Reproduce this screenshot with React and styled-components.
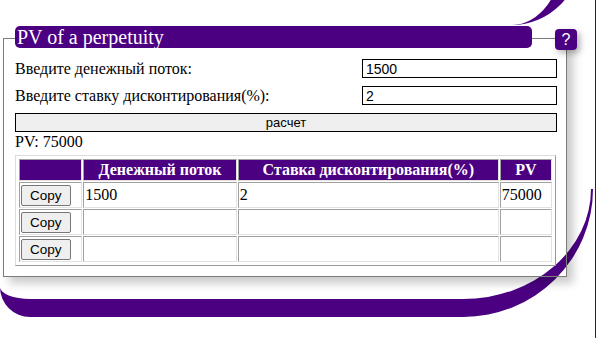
import React from 'react';
import styled, { createGlobalStyle } from 'styled-components';

const INDIGO = '#4b0082';

const GlobalStyle = createGlobalStyle`
  html, body {
    margin: 0;
    padding: 0;
    background: #fff;
  }
  body {
    font-family: "Liberation Serif", "Times New Roman", serif;
    font-size: 16px;
    color: #000;
  }
`;

const Page = styled.div`
  position: relative;
  width: 597px;
  height: 338px;
  overflow: hidden;
`;

const Decor = styled.svg`
  position: absolute;
  left: 0;
  top: 0;
  z-index: 0;
`;

const Panel = styled.div`
  position: relative;
  z-index: 1;
  box-sizing: border-box;
  width: 564px;
  height: 239px;
  margin: 38px 0 0 3px;
  padding: 0 9px 0 11px;
  border: 1px solid #7c7c7c;
  box-shadow: 6px 6px 9px rgba(0, 0, 0, 0.22);
  display: flex;
  flex-direction: column;
`;

const Header = styled.div`
  display: flex;
  margin-top: -13px;
  height: 22px;
`;

const Title = styled.h1`
  margin: 0;
  width: 517px;
  height: 22px;
  box-sizing: border-box;
  padding-left: 2px;
  background: ${INDIGO};
  color: #fff;
  border-radius: 5px;
  font-family: "Liberation Serif", "Times New Roman", serif;
  font-weight: normal;
  font-size: 20px;
  line-height: 22px;
`;

const Help = styled.button`
  position: absolute;
  top: -10px;
  right: -11px;
  width: 22px;
  height: 21px;
  padding: 0;
  border: none;
  border-radius: 4px;
  background: ${INDIGO};
  color: #fff;
  font-family: "Liberation Sans", Arial, sans-serif;
  font-size: 16px;
  line-height: 21px;
  box-shadow: 3px 3px 6px rgba(0, 0, 0, 0.3);
`;

const Row = styled.div`
  display: flex;
  justify-content: space-between;
  align-items: center;
  height: 19px;
  margin-top: ${p => p.$gap}px;
`;

const Label = styled.label`
  font-size: 16px;
  line-height: 19px;
`;

const Field = styled.input`
  box-sizing: border-box;
  width: 195px;
  height: 19px;
  margin: 0;
  padding: 0 3px;
  border: 1px solid #000;
  font-family: "Liberation Sans", Arial, sans-serif;
  font-size: 14px;
  color: #000;
  outline: none;
`;

const CalcButton = styled.button`
  box-sizing: border-box;
  width: 100%;
  height: 19px;
  margin-top: 8px;
  padding: 0;
  border: 1px solid #000;
  background: #efefef;
  font-family: "Liberation Sans", Arial, sans-serif;
  font-size: 13px;
  color: #000;
`;

const Result = styled.div`
  font-size: 16px;
  line-height: 18px;
  margin-top: 1px;
`;

const Table = styled.table`
  box-sizing: border-box;
  width: 541px;
  margin-top: 4px;
  table-layout: fixed;
  border-collapse: separate;
  border-spacing: 1px;
  padding: 2px;
  border: 1px solid;
  border-color: #dcdcdc #9a9a9a #9a9a9a #dcdcdc;
`;

const Th = styled.th`
  box-sizing: border-box;
  width: ${p => p.$w}px;
  height: 22px;
  padding: 1px;
  background: ${INDIGO};
  color: #fff;
  font-weight: bold;
  font-size: 16px;
  text-align: center;
  border: 1px solid;
  border-color: #a0a0a0 #e2e2e2 #e2e2e2 #a0a0a0;
`;

const Td = styled.td`
  box-sizing: border-box;
  height: 26px;
  padding: 1px;
  font-size: 16px;
  vertical-align: middle;
  border: 1px solid;
  border-color: #a0a0a0 #e2e2e2 #e2e2e2 #a0a0a0;
`;

const CopyButton = styled.button`
  box-sizing: border-box;
  height: 21px;
  margin: 0;
  padding: 0 8px;
  border: 1px solid #767676;
  border-radius: 2px;
  background: #efefef;
  font-family: "Liberation Sans", Arial, sans-serif;
  font-size: 13.5px;
  color: #000;
`;

const rows = [
  { cash: '1500', rate: '2', pv: '75000' },
  { cash: '', rate: '', pv: '' },
  { cash: '', rate: '', pv: '' },
];

const Decoration = () =>
  <Decor width="597" height="338" viewBox="0 0 597 338">
    <path
      fill={INDIGO}
      d="M512 25 A68 68 0 0 0 580 -43 L562 -43 A50 68 0 0 1 512 25 Z"
    />
    <rect x="595" y="0" width="1" height="338" fill={INDIGO} />
    <path
      fill={INDIGO}
      d="M0 287 A30 30 0 0 0 30 317 L463 317 A130 128 0 0 0 593 189 L591 189 A128 110 0 0 1 463 299 L30 299 A30 12 0 0 1 0 287 Z"
    />
  </Decor>;

const App = () =>
  <Page>
    <GlobalStyle />
    <Decoration />
    <Panel>
      <Header>
        <Title>PV of a perpetuity</Title>
      </Header>
      <Help>?</Help>
      <Row $gap={11}>
        <Label>Введите денежный поток:</Label>
        <Field defaultValue="1500" />
      </Row>
      <Row $gap={8}>
        <Label>Введите ставку дисконтирования(%):</Label>
        <Field defaultValue="2" />
      </Row>
      <CalcButton>расчет</CalcButton>
      <Result>PV: 75000</Result>
      <Table>
        <thead>
          <tr>
            <Th $w={63}></Th>
            <Th $w={153}>Денежный поток</Th>
            <Th $w={260}>Ставка дисконтирования(%)</Th>
            <Th $w={52}>PV</Th>
          </tr>
        </thead>
        <tbody>
          {rows.map((r, i) =>
            <tr key={i}>
              <Td><CopyButton>Copy</CopyButton></Td>
              <Td>{r.cash}</Td>
              <Td>{r.rate}</Td>
              <Td>{r.pv}</Td>
            </tr>
          )}
        </tbody>
      </Table>
    </Panel>
  </Page>;

export default App;
